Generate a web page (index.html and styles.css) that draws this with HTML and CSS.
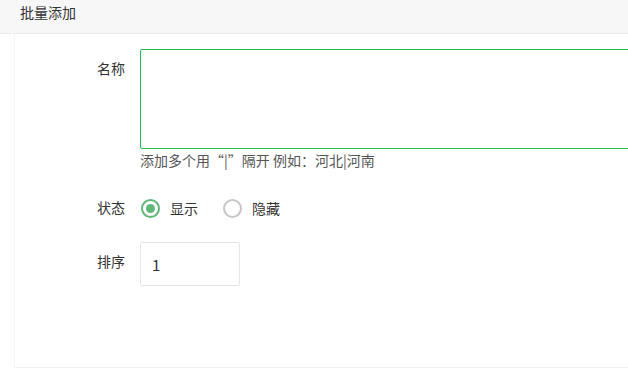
FILE: index.html
```html
<!DOCTYPE html>
<html lang="zh-CN">
<head>
    <meta charset="UTF-8">
    <meta name="viewport" content="width=device-width, initial-scale=1.0">
    <title>批量添加</title>
    <link rel="stylesheet" href="styles.css">
</head>
<body>

<div class="page-header">批量添加</div>

<div class="panel">
    <form class="form">
        <!-- 名称 -->
        <div class="form-item">
            <label class="form-label">名称</label>
            <div class="input-block">
                <textarea class="textarea"></textarea>
                <div class="form-tip">添加多个用“|”隔开 例如：河北|河南</div>
            </div>
        </div>

        <!-- 状态 -->
        <div class="form-item item-radio">
            <label class="form-label">状态</label>
            <div class="input-block radios">
                <div class="radio checked"><span class="radio-icon"></span>显示</div>
                <div class="radio"><span class="radio-icon"></span>隐藏</div>
            </div>
        </div>

        <!-- 排序 -->
        <div class="form-item">
            <label class="form-label">排序</label>
            <div class="input-block">
                <input class="input input-sort" type="text" value="1">
            </div>
        </div>
    </form>
</div>

</body>
</html>
```
FILE: styles.css
```css
body {
    margin: 0;
    padding: 0;
    font-family: "Noto Sans CJK SC", "Noto Sans", sans-serif;
    font-size: 14px;
    color: #333;
    background: #fff;
    overflow: hidden;
}
.page-header {
    height: 33px;
    line-height: 25px;
    padding: 0 20px;
    background: #f7f7f7;
    border-bottom: 1px solid #ececec;
    color: #333;
}
.panel {
    margin-left: 14px;
    height: 318px;
    padding: 15px 0 0 15px;
    border-left: 1px solid #f5f5f5;
    border-bottom: 1px solid #f0f0f0;
    overflow: hidden;
}
.form {
    width: 760px;
}
.form-item {
    display: flex;
    align-items: flex-start;
    margin-bottom: 18px;
}
.item-radio {
    margin-bottom: 16px;
}
.form-label {
    width: 80px;
    padding: 9px 15px;
    line-height: 20px;
    text-align: right;
    flex-shrink: 0;
}
.input-block {
    flex: 1;
}
.textarea {
    display: block;
    width: 100%;
    height: 100px;
    box-sizing: border-box;
    border: 1px solid #1ebd49;
    border-radius: 2px;
    resize: none;
    outline: none;
    padding: 6px 10px;
    font-family: inherit;
}
.form-tip {
    line-height: 20px;
    margin-top: 1px;
    color: #555;
}
.radios {
    display: flex;
    padding-top: 6px;
}
.radio {
    display: flex;
    align-items: center;
    height: 28px;
    margin-left: 1px;
    margin-right: 24px;
    color: #333;
    cursor: pointer;
}
.radio-icon {
    width: 19px;
    height: 19px;
    box-sizing: border-box;
    border: 2px solid #c6c6c6;
    border-radius: 50%;
    margin-right: 10px;
    display: flex;
    align-items: center;
    justify-content: center;
}
.radio.checked .radio-icon {
    border-color: #5fb878;
}
.radio.checked .radio-icon::after {
    content: "";
    width: 9px;
    height: 9px;
    border-radius: 50%;
    background: #5fb878;
}
.input {
    box-sizing: border-box;
    height: 44px;
    border: 1px solid #e6e6e6;
    border-radius: 2px;
    padding: 0 11px;
    font-family: inherit;
    font-size: 15px;
    color: #333;
    outline: none;
}
.input-sort {
    width: 100px;
}
```
